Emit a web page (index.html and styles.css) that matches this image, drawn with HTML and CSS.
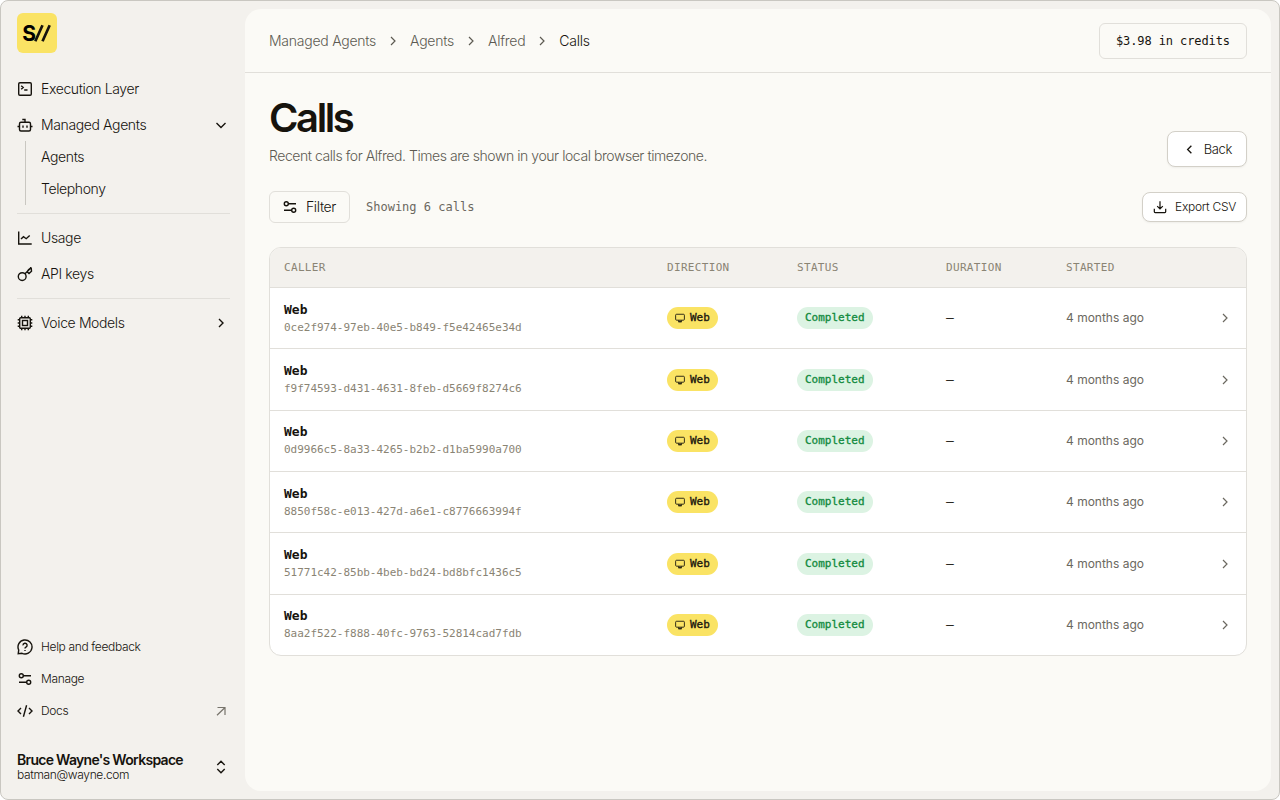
FILE: index.html
```html
<!DOCTYPE html>
<html lang="en">
<head>
  <meta charset="UTF-8" />
  <meta name="viewport" content="width=device-width, initial-scale=1.0" />
  <title>Calls</title>
  <link rel="stylesheet" href="styles.css">
</head>
<body>

  <!-- Icons -->
  <svg class="sprite" aria-hidden="true">
    <symbol id="i-right" viewBox="0 0 16 16"><path d="M6 4 10 8 6 12" /></symbol>
    <symbol id="i-left" viewBox="0 0 16 16"><path d="M10 4 6 8l4 4" /></symbol>
    <symbol id="i-down" viewBox="0 0 16 16"><path d="M3.500 6 8 10.500 12.500 6" /></symbol>
    <symbol id="i-sliders" viewBox="0 0 16 16"><circle cx="4.300" cy="4.800" r="2" /><path d="M6.300 4.800H14M2 11.200h7.700" /><circle cx="11.700" cy="11.200" r="2" /></symbol>
    <symbol id="i-monitor" viewBox="0 0 16 16"><rect x="1" y="2" width="14" height="9.500" rx="1.500" /><path d="M6 11.500V14h4v-2.500M5 14h6" /></symbol>
  </svg>

  <div class="app">
    <aside class="sidebar">
      <div class="logo">
        <svg viewBox="0 0 40 40">
          <text x="5.200" y="28">S</text>
          <path d="M18.300 28.300 25.500 12.300M25.500 28.300 32.700 12.300" />
        </svg>
      </div>

      <nav class="menu">
        <a href="#" class="item">
          <svg class="icon" viewBox="0 0 16 16"><rect x="1.700" y="1.700" width="12.600" height="12.600" rx="1.200" /><path d="m4.200 4.700 2 1.800-2 1.800M7.200 9h3.300" /></svg>
          Execution Layer
        </a>
        <a href="#" class="item">
          <svg class="icon" viewBox="0 0 16 16"><rect x="2.500" y="5.200" width="11" height="8.800" rx="1.500" /><path d="M8 5.200V2.500H5.300M.5 9.500h2M13.500 9.500h2M6 8.500v2.300M10 8.500v2.300" /></svg>
          Managed Agents
          <svg class="icon chevron"><use href="#i-down" /></svg>
        </a>
        <div class="submenu">
          <a href="#">Agents</a>
          <a href="#">Telephony</a>
        </div>
        <hr>
        <a href="#" class="item">
          <svg class="icon" viewBox="0 0 16 16"><path d="M1.700 1.500V14h13M4 9l2.500-2.300 2.700 2L12.700 5.500" /></svg>
          Usage
        </a>
        <a href="#" class="item">
          <svg class="icon" viewBox="0 0 16 16"><circle cx="5.200" cy="10.600" r="3.900" /><path d="M8 7.800 14.300 1.500M10 5.800 12 7.500 14.500 5.200 14.200 1.500M10 5.800 11.500 3.700 14.200 1.500" /></svg>
          API keys
        </a>
        <hr>
        <a href="#" class="item">
          <svg class="icon" viewBox="0 0 16 16"><rect x="2.700" y="2.700" width="10.600" height="10.600" rx="1" /><rect x="5.500" y="5.500" width="5" height="5" /><path d="M4.700 .7v2M8 .7v2M11.300 .7v2M4.700 13.300v2M8 13.300v2M11.300 13.300v2M.7 4.700h2M.7 8h2M.7 11.300h2M13.300 4.700h2M13.300 8h2M13.300 11.300h2" /></svg>
          Voice Models
          <svg class="icon chevron"><use href="#i-right" /></svg>
        </a>
      </nav>

      <nav class="menu-bottom">
        <a href="#">
          <svg class="icon" viewBox="0 0 16 16"><path d="M1.200 14.800 1.700 11A7 7 0 1 1 5 14.300z" /><path d="M6 6.400a2.050 2.050 0 1 1 3 1.700c-.7.400-1 .7-1 1.300M8 11v1" /></svg>
          Help and feedback
        </a>
        <a href="#">
          <svg class="icon"><use href="#i-sliders" /></svg>
          Manage
        </a>
        <a href="#">
          <svg class="icon" viewBox="0 0 16 16"><path d="M4 5 1 8l3 3M12 5l3 3-3 3M9.600 2.200 6.400 13.800" /></svg>
          Docs
          <svg class="icon chevron external" viewBox="0 0 16 16"><path d="M4.500 4.500h7.500V12M12 4.500 4 12.200" /></svg>
        </a>
      </nav>

      <div class="workspace">
        <div>
          <strong>Bruce Wayne's Workspace</strong>
          <span>batman@wayne.com</span>
        </div>
        <svg class="icon" viewBox="0 0 16 16"><path d="M4.300 6 8 2.300 11.700 6M4.300 10 8 13.700 11.700 10" /></svg>
      </div>
    </aside>

    <main class="panel">
      <header class="topbar">
        <nav class="breadcrumb">
          <a href="#">Managed Agents</a>
          <svg class="icon"><use href="#i-right" /></svg>
          <a href="#">Agents</a>
          <svg class="icon"><use href="#i-right" /></svg>
          <a href="#">Alfred</a>
          <svg class="icon"><use href="#i-right" /></svg>
          <span>Calls</span>
        </nav>
        <a href="#" class="credits">$3.98 in credits</a>
      </header>

      <section class="content">
        <div class="heading">
          <div>
            <h1>Calls</h1>
            <p>Recent calls for Alfred. Times are shown in your local browser timezone.</p>
          </div>
          <button class="btn btn-back"><svg class="icon"><use href="#i-left" /></svg>Back</button>
        </div>

        <div class="toolbar">
          <button class="btn-filter"><svg class="icon"><use href="#i-sliders" /></svg>Filter</button>
          <span class="count">Showing 6 calls</span>
          <button class="btn btn-export"><svg class="icon" viewBox="0 0 16 16"><path d="M8 1.500v8.500M4.800 7 8 10.200 11.200 7M1.500 10v3.500q0 1 1 1h11q1 0 1-1V10" /></svg>Export CSV</button>
        </div>

        <div class="table">
          <div class="row head">
            <span>CALLER</span><span>DIRECTION</span><span>STATUS</span><span>DURATION</span><span>STARTED</span>
          </div>
          <div class="row">
            <div class="caller"><b>Web</b><span>0ce2f974-97eb-40e5-b849-f5e42465e34d</span></div>
            <div><span class="badge web"><svg class="icon"><use href="#i-monitor" /></svg>Web</span></div>
            <div><span class="badge done">Completed</span></div>
            <span class="duration">–</span>
            <span class="started">4 months ago</span>
            <svg class="icon arrow"><use href="#i-right" /></svg>
          </div>
          <div class="row">
            <div class="caller"><b>Web</b><span>f9f74593-d431-4631-8feb-d5669f8274c6</span></div>
            <div><span class="badge web"><svg class="icon"><use href="#i-monitor" /></svg>Web</span></div>
            <div><span class="badge done">Completed</span></div>
            <span class="duration">–</span>
            <span class="started">4 months ago</span>
            <svg class="icon arrow"><use href="#i-right" /></svg>
          </div>
          <div class="row">
            <div class="caller"><b>Web</b><span>0d9966c5-8a33-4265-b2b2-d1ba5990a700</span></div>
            <div><span class="badge web"><svg class="icon"><use href="#i-monitor" /></svg>Web</span></div>
            <div><span class="badge done">Completed</span></div>
            <span class="duration">–</span>
            <span class="started">4 months ago</span>
            <svg class="icon arrow"><use href="#i-right" /></svg>
          </div>
          <div class="row">
            <div class="caller"><b>Web</b><span>8850f58c-e013-427d-a6e1-c8776663994f</span></div>
            <div><span class="badge web"><svg class="icon"><use href="#i-monitor" /></svg>Web</span></div>
            <div><span class="badge done">Completed</span></div>
            <span class="duration">–</span>
            <span class="started">4 months ago</span>
            <svg class="icon arrow"><use href="#i-right" /></svg>
          </div>
          <div class="row">
            <div class="caller"><b>Web</b><span>51771c42-85bb-4beb-bd24-bd8bfc1436c5</span></div>
            <div><span class="badge web"><svg class="icon"><use href="#i-monitor" /></svg>Web</span></div>
            <div><span class="badge done">Completed</span></div>
            <span class="duration">–</span>
            <span class="started">4 months ago</span>
            <svg class="icon arrow"><use href="#i-right" /></svg>
          </div>
          <div class="row">
            <div class="caller"><b>Web</b><span>8aa2f522-f888-40fc-9763-52814cad7fdb</span></div>
            <div><span class="badge web"><svg class="icon"><use href="#i-monitor" /></svg>Web</span></div>
            <div><span class="badge done">Completed</span></div>
            <span class="duration">–</span>
            <span class="started">4 months ago</span>
            <svg class="icon arrow"><use href="#i-right" /></svg>
          </div>
        </div>
      </section>
    </main>
  </div>

</body>
</html>
```
FILE: styles.css
```css
* {
  box-sizing: border-box;
}

body {
  margin: 0;
  background-color: #fff;
  color: #16130d;
  font-family: Inter, "Liberation Sans", sans-serif;
  font-size: 14px;
  font-weight: 300;
  line-height: 18px;
  letter-spacing: -0.38px;
}

a {
  color: inherit;
  text-decoration: none;
}

button {
  font: inherit;
  letter-spacing: inherit;
  color: inherit;
}

.sprite {
  display: none;
}

.icon {
  width: 16px;
  height: 16px;
  flex: none;
  fill: none;
  stroke: currentColor;
  stroke-width: 1.4;
}

.app {
  display: flex;
  height: 800px;
  padding: 8px;
  border: 1px solid #c9c7c1;
  border-radius: 8px;
  background-color: #f3f1ed;
}

/* Sidebar */
.sidebar {
  display: flex;
  flex-direction: column;
  width: 236px;
  padding: 4px 15px 9px 8px;
}

.logo {
  width: 40px;
  height: 40px;
  border-radius: 6px;
  background-color: #fae364;
}

.logo svg {
  display: block;
}

.logo text {
  font-size: 21px;
  font-weight: 700;
}

.logo path {
  stroke: #16130d;
  stroke-width: 2.7;
}

.menu {
  margin-top: 18px;
}

.item,
.menu-bottom a {
  display: flex;
  align-items: center;
  gap: 8px;
  height: 36px;
}

.chevron {
  margin-left: auto;
  margin-right: 1px;
}

.submenu {
  margin: -2px 0 8px 8px;
  padding-left: 15px;
  border-left: 1px solid #c9c7c1;
}

.submenu a {
  display: flex;
  align-items: center;
  height: 32px;
}

.menu hr {
  height: 1px;
  margin: 6px 0;
  border: none;
  background-color: #e1dfda;
}

.menu-bottom {
  margin-top: auto;
  font-size: 12px;
  letter-spacing: -0.35px;
}

.menu-bottom a {
  height: 32px;
}

.external {
  stroke: #77746c;
  stroke-width: 1.2;
}

.workspace {
  display: flex;
  align-items: center;
  justify-content: space-between;
  margin-top: 25px;
  padding-right: 1px;
}

.workspace strong,
.workspace span {
  display: block;
}

.workspace strong {
  font-weight: 600;
  line-height: 16px;
  letter-spacing: -0.7px;
}

.workspace span {
  font-size: 12px;
  line-height: 14px;
  letter-spacing: -0.35px;
}

/* Main panel */
.panel {
  flex: 1;
  border-radius: 16px;
  background-color: #fbfaf6;
}

.topbar {
  display: flex;
  align-items: center;
  justify-content: space-between;
  height: 64px;
  padding: 0 24px;
  border-bottom: 1px solid #e1dfda;
}

.breadcrumb {
  display: flex;
  align-items: center;
  gap: 9px;
  color: #5d5a52;
  letter-spacing: -0.25px;
}

.breadcrumb .icon {
  stroke-width: 1.2;
}

.breadcrumb span {
  color: #16130d;
}

.credits,
.count,
.table {
  font-family: "DejaVu Sans Mono", "Liberation Mono", monospace;
  font-weight: 400;
  letter-spacing: 0;
}

.credits {
  padding: 10px 16px;
  border: 1px solid #e1dfda;
  border-radius: 6px;
  font-size: 12px;
  line-height: 14px;
  letter-spacing: -0.1px;
}

.content {
  padding: 24px;
}

.heading {
  display: flex;
  align-items: flex-end;
  justify-content: space-between;
}

h1 {
  margin: 0;
  font-size: 40px;
  font-weight: 600;
  line-height: 42px;
  letter-spacing: -2.4px;
}

.heading p {
  margin: 6px 0 0;
  color: #5d5a52;
  line-height: 22px;
  letter-spacing: -0.44px;
}

.btn {
  display: flex;
  align-items: center;
  border: 1px solid #d3d0c8;
  border-radius: 8px;
  background-color: #fff;
  box-shadow: 0 1px 2px rgba(0, 0, 0, 0.05);
}

.btn-back {
  gap: 7px;
  height: 36px;
  padding: 0 14px;
  font-size: 13px;
}

.btn-back .icon {
  width: 15px;
  height: 15px;
}

.toolbar {
  display: flex;
  align-items: center;
  margin-top: 24px;
}

.btn-filter {
  display: flex;
  align-items: center;
  gap: 8px;
  width: 81px;
  height: 32px;
  padding: 0 12px;
  border: 1px solid #e1dfda;
  border-radius: 6px;
  background: none;
}

.count {
  margin-left: 16px;
  color: #6b6860;
  font-size: 12px;
}

.btn-export {
  gap: 8px;
  height: 30px;
  margin-left: auto;
  padding: 0 10px;
  font-size: 12px;
  letter-spacing: -0.28px;
}

.btn-export .icon {
  width: 14px;
  height: 14px;
}

/* Calls table */
.table {
  margin-top: 24px;
  border: 1px solid #e1dfda;
  border-radius: 12px;
  background-color: #fff;
  overflow: hidden;
}

.row {
  display: grid;
  grid-template-columns: 383px 130px 149px 120px 1fr 16px;
  align-items: center;
  height: 61.35px;
  padding: 0 13px 0 14px;
  border-top: 1px solid #e1dfda;
}

.head {
  height: 39px;
  border-top: none;
  background-color: #f3f1ed;
  color: #8a8474;
  font-size: 11px;
  letter-spacing: 0.33px;
}

.caller b,
.caller span {
  display: block;
}

.caller b {
  font-size: 13px;
  line-height: 18px;
}

.caller span {
  color: #8a8474;
  font-size: 11px;
  line-height: 17px;
  letter-spacing: -0.02px;
}

.badge {
  display: inline-flex;
  align-items: center;
  height: 22px;
  padding: 0 8px;
  border-radius: 11px;
  font-size: 11px;
  vertical-align: middle;
  -webkit-text-stroke: 0.3px currentColor;
}

.badge .icon {
  width: 10px;
  height: 10px;
  margin-right: 5px;
}

.web {
  background-color: #fae364;
}

.done {
  background-color: #dcf3e3;
  color: #128a3e;
}

.duration {
  font-size: 13px;
}

.started {
  color: #6b6860;
  font-family: Inter, "Liberation Sans", sans-serif;
  font-size: 12px;
}

.arrow {
  color: #6b6860;
  stroke-width: 1.2;
}
```
